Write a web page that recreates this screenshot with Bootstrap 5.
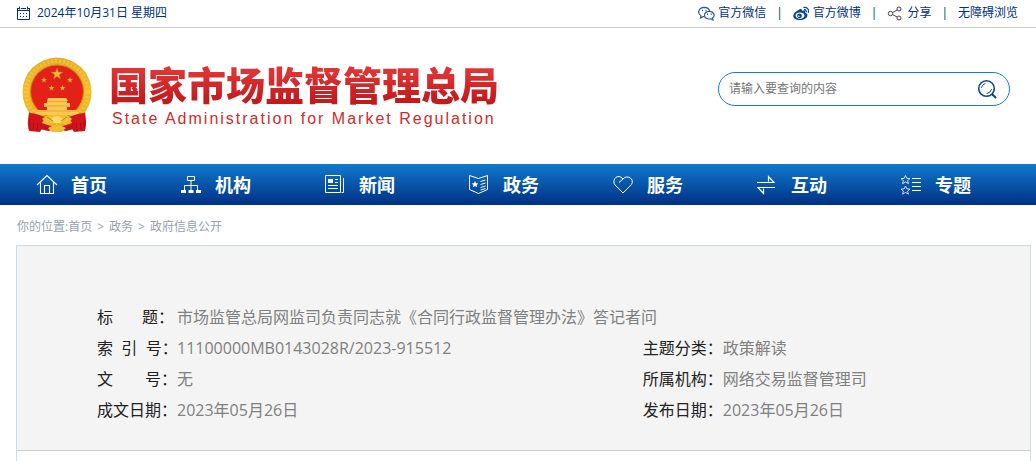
<!DOCTYPE html>
<html lang="zh-CN">
<head>
<meta charset="utf-8">
<meta name="viewport" content="width=device-width, initial-scale=1">
<title>国家市场监督管理总局</title>
<link href="https://cdn.jsdelivr.net/npm/bootstrap@5.3.0/dist/css/bootstrap.min.css" rel="stylesheet">
<style>
  body { font-family: "Open Sans", "Noto Sans CJK SC", sans-serif; font-size: 12px; line-height: 20px; color: #333; background: #fff; }
  a { color: inherit; text-decoration: none; }
  svg { flex: none; display: block; }
  .topbar { color: #00307f; border-bottom: 1px solid #ccc; padding: 3px 18px 4px 16px; }
  .today { gap: 6px; }
  .util-links { gap: 10px; }
  .util-links a { gap: 3px; }
  .masthead { padding: 28px 26px 28px 20px; }
  .brand { gap: 15px; }
  .brand-cn { font-size: 39px; line-height: 46px; font-weight: 900; background: linear-gradient(#e03434 20%, #c31a1e 85%); -webkit-background-clip: text; background-clip: text; color: transparent; }
  .brand-en { font-family: "Liberation Sans", sans-serif; font-size: 16px; line-height: 22px; letter-spacing: 2px; color: #d02a2a; padding-left: 3px; }
  .searchbox { width: 292px; height: 34px; border: 1px solid #1a7cc8; border-radius: 17px; margin-bottom: 14px; padding: 0 12px 0 10px; }
  .searchbox input { border: 0; outline: 0; background: none; min-width: 0; font-size: 12px; padding: 0; }
  .searchbox input::placeholder { color: #757575; }
  .searchbox button { border: 0; background: none; padding: 0; }
  .mainnav { background: linear-gradient(#107ace, #003083); padding-right: 28px; }
  .mainnav a { flex: 1 1 0; padding-left: 36px; gap: 13px; height: 41px; color: #fff; font-size: 18px; line-height: 24px; font-weight: 700; }
  .crumbs { color: #999fa8; padding: 12px 16px 8px 17px; gap: 5px; }
  .panel { border: 1px solid #cfdae8; border-bottom: 0; margin: 0 5px 0 16px; min-height: 216px; }
  .meta { background: #f4f4f4; border-bottom: 1px solid #ccc; padding: 56px 0 24px 80px; font-size: 16px; line-height: 31px; }
  .meta dt { width: 80px; font-weight: 400; color: #222; white-space: pre; }
  .meta dd { margin: 0; color: #808080; }
  .meta .first-half { flex: 0 0 58.5%; }
</style>
</head>
<body>
<div class="topbar d-flex justify-content-between align-items-center">
  <div class="today d-flex align-items-center">
    <svg width="15" height="15" viewBox="0 0 15 15" fill="none" stroke="#00307f"><path d="M1.500 3v10.500h12V3M1.500 4.500h12" /><path d="M1 2.500h2M5 2.500h5M12 2.500h2M3.500.5v3M11.500.5v3" /><path d="M4 7.500h1m2 0h1m2 0h1M4 10.500h1m2 0h1m2 0h1"/></svg>
    <span>2024年10月31日 星期四</span>
  </div>
  <nav class="util-links d-flex align-items-center">
    <a href="#" class="d-flex align-items-center"><svg width="17" height="15" viewBox="0 0 17 15" fill="none" stroke="#2f5590" stroke-width="1.200"><path d="M6.500 10.600 5 10.500 2.500 12l.5-2.200C-.8 7.600.3 1.700 6 1.300c3 0 5.300 1.700 5.700 4"/><path d="M11.200 5.300c-6.400.4-6.200 8 .3 7.700l1.400-.1 2 1-.5-1.900c3.500-2.200 1.300-6.800-3.200-6.700z" fill="#fff"/><path d="M4 4.500h1M7.500 4.500h1M9 8.200h1M12.700 8.200h1" stroke-width="1.500"/></svg><span>官方微信</span></a>
    <span>|</span>
    <a href="#" class="d-flex align-items-center"><svg width="17" height="15" viewBox="0 0 16 15"><path d="M6.200 3.200c1.500-.8 2.700 0 2.200 1.700 2.400-.9 3.700 0 3.200 1.700 5.100 2.400 1.200 7.400-5 7.400C-1.500 14-2 8.500 3 5.200c1-.8 2-1.500 3.200-2z" fill="#0c4296"/><ellipse cx="6.500" cy="9.600" rx="4.400" ry="3.100" fill="#fff"/><circle cx="6" cy="9.800" r="2.400" fill="#0c4296"/><circle cx="5.400" cy="10.300" r=".8" fill="#fff"/><path d="M10 1.500c3.500-.8 6 2 4.900 5.300M10.500 3.800c1.600-.3 2.700 1 2.200 2.500" fill="none" stroke="#0c4296" stroke-width="1.300"/></svg><span>官方微博</span></a>
    <span>|</span>
    <a href="#" class="d-flex align-items-center"><svg width="17" height="15" viewBox="0 0 17 15" fill="none" stroke="#444"><circle cx="3.500" cy="7.500" r="2.200"/><circle cx="12" cy="3" r="2"/><circle cx="12" cy="12" r="2"/><path d="m5.500 6.500 4.600-2.500M5.500 8.500l4.600 2.500"/></svg><span>分享</span></a>
    <span>|</span>
    <a href="#">无障碍浏览</a>
  </nav>
</div>

<header class="masthead d-flex justify-content-between align-items-center">
  <a href="#" class="brand d-flex align-items-center">
    <svg width="74" height="80" viewBox="0 0 74 80">
      <defs>
        <path id="star" d="M0-6 1.500-1.900 5.800-1.900 2.300.8 3.600 5 0 2.500-3.600 5-2.300.8-5.800-1.900-1.500-1.900z"/>
        <linearGradient id="gold" x2="0" y2="1"><stop stop-color="#e4ad27"/><stop offset=".5" stop-color="#f3bd24"/><stop offset="1" stop-color="#e5aa20"/></linearGradient>
      </defs>
      <path d="M10 53c-2 8-3 15-1 22l11 1 3-5h28l3 5 11-1c2-7 1-14-1-22z" fill="#d3151b"/>
      <path d="m14 62-1 12m5-10-1 11M60 62l1 12m-5-10 1 11M10 64v9M64 64v9" stroke="#a01218" fill="none"/>
      <circle cx="37" cy="36" r="34.500" fill="url(#gold)"/>
      <circle cx="37" cy="36" r="31" fill="none" stroke="#fad052" stroke-opacity=".55" stroke-width="4" stroke-dasharray="2 2"/>
      <circle cx="37" cy="35.500" r="26.500" fill="#e32119" stroke="#cf8a1c"/>
      <g fill="#f0b836" stroke="#ba721a" stroke-width=".4"><use href="#star" transform="translate(37 18)"/><use href="#star" transform="translate(24 24) scale(.5)"/><use href="#star" transform="translate(50 24) scale(.5)"/><use href="#star" transform="translate(31.500 32) scale(.5)"/><use href="#star" transform="translate(42.500 32) scale(.5)"/></g>
      <path d="M28 42h18l2 3h-1v2h3v4h-3v3h13l-2 5H16l-2-5h13v-3h-3v-4h3v-2z" fill="#f9c850"/>
      <path d="M27 45.500h20M25 50h24M15 55h44" stroke="#dc9a2c" stroke-width=".7"/>
      <path d="M9 57c8 0 11 3 17 4l-5 7-11-2zM65 57c-8 0-11 3-17 4l5 7 11-2z" fill="#d3151b"/>
      <path d="M27 59h20l5 4-6 6-9-3-9 3-6-6z" fill="#f1be31"/>
      <path d="M31 63q6-6 12 0l-3 4h-6z" fill="#ffda66"/>
      <path d="m27 61 6 4M47 61l-6 4" stroke="#c9881c"/>
      <path d="M19 66q8 7 18 4 10 3 18-4l-1 7-8 2-9-2-9 2-8-2z" fill="#c51219"/>
      <path d="M28 72q9-6 18 0l-4 4H32z" fill="#f1be31"/>
    </svg>
    <span>
      <span class="brand-cn d-block">国家市场监督管理总局</span>
      <span class="brand-en d-block">State Administration for Market Regulation</span>
    </span>
  </a>
  <form class="searchbox d-flex align-items-center" role="search">
    <input type="text" class="flex-grow-1" aria-label="请输入要查询的内容" placeholder="请输入要查询的内容">
    <button type="button" aria-label="搜索"><svg width="20" height="20" viewBox="0 0 20 20" fill="none" stroke="#0c4296" stroke-linecap="round"><circle cx="9.500" cy="9.500" r="7.800" stroke-width="1.600"/><path d="m15.500 15.500 3 3" stroke-width="2"/><path d="M4.500 8.500q.7-3 3.500-4M10 14.500q3.500-.5 4.500-4"/></svg></button>
  </form>
</header>

<nav class="mainnav d-flex">
  <a href="#" class="d-flex align-items-center"><svg width="22" height="22" viewBox="0 0 22 22" fill="none" stroke="#fff" stroke-width="1.100"><path d="m1 11 10-9.500L21 11M4.500 8.500v11h13v-11M8.500 19v-7.500h5V19"/></svg><span>首页</span></a>
  <a href="#" class="d-flex align-items-center"><svg width="22" height="22" viewBox="0 0 22 22" fill="none" stroke="#fff"><path d="M7.500 2.500h7v4h-7zM11 7v9M4.500 16v-4.500h13V16"/><path d="M1 17.500h5M8.500 17.500h5M16 17.500h5" stroke-width="3"/></svg><span>机构</span></a>
  <a href="#" class="d-flex align-items-center"><svg width="22" height="22" viewBox="0 0 22 22" fill="none" stroke="#fff"><path d="M1.500 1.500h15v17h-15zM19.500 4v14.500h-2M4 11.500h10M4 14.500h10M11 5.500h3M11 8.500h3"/><path d="M4 5h5v4H4z" fill="#fff" stroke="none"/></svg><span>新闻</span></a>
  <a href="#" class="d-flex align-items-center"><svg width="22" height="22" viewBox="0 0 22 22" fill="none" stroke="#fff"><path d="M1.500 1.500 10.500 4.500 19.500 1.500v14L10.500 19.500l-9-4z"/><path d="m12.500 7.500 5-1.500M12.500 10.500l5-1.500M12.500 13.500l5-1.500M12.500 16l5-1.500"/><path d="m7 7 1 2.200 2.400.2-1.800 1.500.6 2.300L7 12l-2.200 1.200.6-2.300-1.800-1.500L6 9.200z" fill="#fff" stroke="none"/></svg><span>政务</span></a>
  <a href="#" class="d-flex align-items-center"><svg width="22" height="22" viewBox="0 0 22 22" fill="none" stroke="#fff"><path d="m11 19-7.700-7.800C-.5 7.300 4 .2 9 3.200L11 5c4-5 12 0 8.500 5.500z"/><path d="M11 5 7 8.500"/></svg><span>服务</span></a>
  <a href="#" class="d-flex align-items-center"><svg width="22" height="22" viewBox="0 0 22 22" fill="none" stroke="#fff" stroke-width="1.200"><path d="M1 8.500h17l-5.500-6v5M19 13.500H2l5.500 6v-5"/></svg><span>互动</span></a>
  <a href="#" class="d-flex align-items-center"><svg width="22" height="22" viewBox="0 0 22 22" fill="none" stroke="#fff"><g stroke-width=".8"><path id="listStar" d="m5.500 1.500 1.300 2.800 3.200.3-2.400 2 .8 3L5.500 8 2.600 9.600l.8-3-2.400-2 3.200-.3z"/><use href="#listStar" y="10.500"/></g><path d="M12 4.500h9M12 8.500h9M12 12.500h9M12 16.500h9"/></svg><span>专题</span></a>
</nav>

<nav class="crumbs d-flex" aria-label="你的位置">
  <span>你的位置:<a href="#">首页</a></span><span>&gt;</span><a href="#">政务</a><span>&gt;</span><a href="#">政府信息公开</a>
</nav>

<main class="panel">
  <dl class="meta mb-0">
    <div class="d-flex"><dt>标&nbsp;&nbsp;&nbsp;&nbsp;&nbsp;&nbsp;&nbsp;题：</dt><dd>市场监管总局网监司负责同志就《合同行政监督管理办法》答记者问</dd></div>
    <div class="d-flex">
      <div class="first-half d-flex"><dt>索&nbsp;&nbsp;引&nbsp;&nbsp;号：</dt><dd>11100000MB0143028R/2023-915512</dd></div>
      <div class="d-flex"><dt>主题分类：</dt><dd>政策解读</dd></div>
    </div>
    <div class="d-flex">
      <div class="first-half d-flex"><dt>文　　号：</dt><dd>无</dd></div>
      <div class="d-flex"><dt>所属机构：</dt><dd>网络交易监督管理司</dd></div>
    </div>
    <div class="d-flex">
      <div class="first-half d-flex"><dt>成文日期：</dt><dd>2023年05月26日</dd></div>
      <div class="d-flex"><dt>发布日期：</dt><dd>2023年05月26日</dd></div>
    </div>
  </dl>
</main>
<script src="https://cdn.jsdelivr.net/npm/bootstrap@5.3.0/dist/js/bootstrap.bundle.min.js"></script>
</body>
</html>
